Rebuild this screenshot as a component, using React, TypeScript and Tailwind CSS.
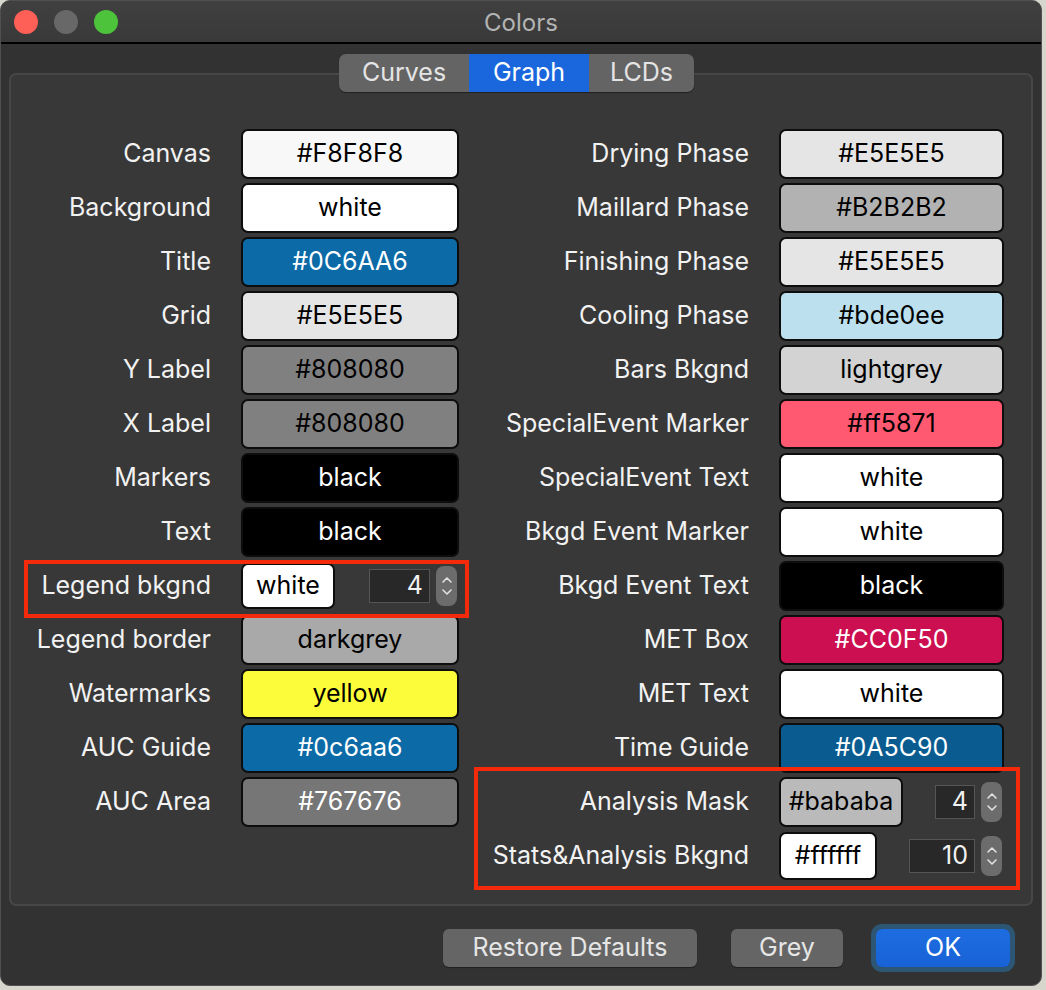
import { ChevronUp, ChevronDown } from 'lucide-react';

type Swatch = {
    label: string;
    value: string;
    color: string;
    btn?: string;
    spin?: string;
    input?: string;
};

// left column of the Graph tab
const leftRows: Swatch[] = [
    { label: 'Canvas', value: '#F8F8F8', color: 'bg-[#F8F8F8] text-black' },
    { label: 'Background', value: 'white', color: 'bg-white text-black' },
    { label: 'Title', value: '#0C6AA6', color: 'bg-[#0C6AA6] text-white' },
    { label: 'Grid', value: '#E5E5E5', color: 'bg-[#E5E5E5] text-black' },
    { label: 'Y Label', value: '#808080', color: 'bg-[#808080] text-black' },
    { label: 'X Label', value: '#808080', color: 'bg-[#808080] text-black' },
    { label: 'Markers', value: 'black', color: 'bg-black text-white' },
    { label: 'Text', value: 'black', color: 'bg-black text-white' },
    { label: 'Legend bkgnd', value: 'white', color: 'bg-white text-black', btn: 'w-[94px] h-[46px]', spin: '4', input: 'w-[61px]' },
    { label: 'Legend border', value: 'darkgrey', color: 'bg-[#A9A9A9] text-black' },
    { label: 'Watermarks', value: 'yellow', color: 'bg-[#FDFC3A] text-black' },
    { label: 'AUC Guide', value: '#0c6aa6', color: 'bg-[#0C6AA6] text-white' },
    { label: 'AUC Area', value: '#767676', color: 'bg-[#767676] text-white' },
];

const rightRows: Swatch[] = [
    { label: 'Drying Phase', value: '#E5E5E5', color: 'bg-[#E5E5E5] text-black' },
    { label: 'Maillard Phase', value: '#B2B2B2', color: 'bg-[#B2B2B2] text-black' },
    { label: 'Finishing Phase', value: '#E5E5E5', color: 'bg-[#E5E5E5] text-black' },
    { label: 'Cooling Phase', value: '#bde0ee', color: 'bg-[#BDE0EE] text-black' },
    { label: 'Bars Bkgnd', value: 'lightgrey', color: 'bg-[#D3D3D3] text-black' },
    { label: 'SpecialEvent Marker', value: '#ff5871', color: 'bg-[#FF5871] text-black' },
    { label: 'SpecialEvent Text', value: 'white', color: 'bg-white text-black' },
    { label: 'Bkgd Event Marker', value: 'white', color: 'bg-white text-black' },
    { label: 'Bkgd Event Text', value: 'black', color: 'bg-black text-white' },
    { label: 'MET Box', value: '#CC0F50', color: 'bg-[#CC0F50] text-white' },
    { label: 'MET Text', value: 'white', color: 'bg-white text-black' },
    { label: 'Time Guide', value: '#0A5C90', color: 'bg-[#0A5C90] text-white' },
    { label: 'Analysis Mask', value: '#bababa', color: 'bg-[#BABABA] text-black', btn: 'w-[124px] h-[50px]', spin: '4', input: 'w-[40px]' },
    { label: 'Stats&Analysis Bkgnd', value: '#ffffff', color: 'bg-white text-black', btn: 'w-[98px] h-[48px]', spin: '10', input: 'w-[66px]' },
];

function SpinBox({ value, input }: { value: string; input: string }) {
    return (
        <div className="flex items-center gap-[6px]">
            <div className={`${input} h-[34px] bg-[#282828] border border-[#555555] flex items-center justify-end pr-[6px] text-[25px] text-[#f2f2f2]`}>
                {value}
            </div>
            <div className="w-[21px] h-[40px] rounded-[8px] bg-[#6c6c6c] flex flex-col items-center justify-center text-[#e2e2e2]">
                <ChevronUp size={16} strokeWidth={2.4} className="-mb-[2px]" />
                <ChevronDown size={16} strokeWidth={2.4} className="-mt-[2px]" />
            </div>
        </div>
    );
}

function Row({ row, labelW, btnW }: { row: Swatch; labelW: string; btnW: string }) {
    return (
        <div className="h-[54px] flex items-center">
            <div className={`${labelW} text-right text-[25px] text-[#f2f2f2] whitespace-nowrap`}>{row.label}</div>
            <div className={`${btnW} ml-[30px] flex items-center`}>
                <div className={`${row.btn ?? 'w-full h-[50px]'} ${row.color} flex items-center justify-center rounded-[7px] border-2 border-[#0d0d0d] text-[25px]`}>
                    {row.value}
                </div>
                {row.spin && (
                    <div className="flex-1 flex justify-end pr-[2px]">
                        <SpinBox value={row.spin} input={row.input ?? 'w-[40px]'} />
                    </div>
                )}
            </div>
        </div>
    );
}

export default function App() {
    return (
        <main className="w-[1046px] h-[990px] bg-[#d6d6cc] font-[Inter,'Liberation_Sans',sans-serif] select-none">
            <div className="w-[1042px] h-[986px] rounded-[10px] overflow-hidden bg-[#323232] border border-[#505050] flex flex-col">
                {/* title bar */}
                <div className="h-[43px] shrink-0 grid grid-cols-[1fr_auto_1fr] items-center bg-gradient-to-b from-[#404040] to-[#393939] border-b-2 border-black">
                    <div className="flex items-center gap-[16px] pl-[13px]">
                        <span className="w-[24px] h-[24px] rounded-full bg-[#FE5F57]"></span>
                        <span className="w-[24px] h-[24px] rounded-full bg-[#686868]"></span>
                        <span className="w-[24px] h-[24px] rounded-full bg-[#4DC33C]"></span>
                    </div>
                    <div className="text-[24px] text-[#b4b4b4] pt-[2px]">Colors</div>
                    <div></div>
                </div>

                <div className="flex-1 flex flex-col px-[8px] pt-[10px]">
                    {/* tabs */}
                    <div className="relative z-10 flex justify-center pr-[9px]">
                        <div className="flex h-[38px] rounded-[7px] overflow-hidden bg-[#646464] text-[25px] text-[#e4e4e4] shadow-[0_1px_1px_rgba(0,0,0,0.4)]">
                            <div className="w-[130px] flex items-center justify-center">Curves</div>
                            <div className="w-[120px] flex items-center justify-center bg-[#1A66DC] text-white">Graph</div>
                            <div className="w-[105px] flex items-center justify-center">LCDs</div>
                        </div>
                    </div>

                    {/* group box */}
                    <div className="-mt-[19px] rounded-[7px] border-2 border-[#474747] bg-[#383838] pt-[52px] pb-[21px] pl-[13px] flex gap-[5px]">
                        <div className="relative w-[445px]">
                            {leftRows.map((row) => (
                                <Row key={row.label} row={row} labelW="w-[187px]" btnW="w-[218px]" />
                            ))}
                            <div className="absolute left-0 top-[433px] w-[445px] h-[58px] border-4 border-[#F52A0A] pointer-events-none"></div>
                        </div>
                        <div className="relative w-[546px]">
                            {rightRows.map((row) => (
                                <Row key={row.label} row={row} labelW="w-[275px]" btnW="w-[225px]" />
                            ))}
                            <div className="absolute left-0 top-[640px] w-[546px] h-[123px] border-4 border-[#F52A0A] pointer-events-none"></div>
                        </div>
                    </div>

                    {/* dialog buttons */}
                    <div className="flex justify-end items-center pr-[23px] mt-[23px] text-[25px] text-[#e6e6e6]">
                        <div className="w-[254px] h-[38px] rounded-[6px] bg-[#656565] flex items-center justify-center shadow-[0_1px_1px_rgba(0,0,0,0.4)]">Restore Defaults</div>
                        <div className="w-[112px] h-[38px] ml-[34px] rounded-[6px] bg-[#656565] flex items-center justify-center shadow-[0_1px_1px_rgba(0,0,0,0.4)]">Grey</div>
                        <div className="w-[134px] h-[38px] ml-[33px] rounded-[6px] bg-gradient-to-b from-[#1E6DE0] to-[#1762D6] text-white flex items-center justify-center shadow-[0_0_0_5px_#2C5673]">OK</div>
                    </div>
                </div>
            </div>
        </main>
    );
}
